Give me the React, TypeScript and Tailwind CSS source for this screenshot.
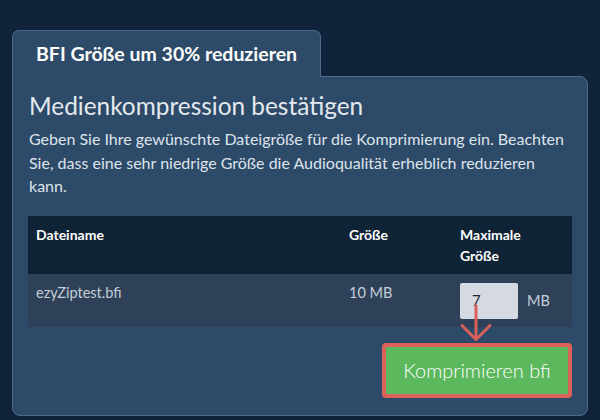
import React from 'react';

const font = { fontFamily: 'Lato, "Open Sans", sans-serif' };

function ArrowDown() {
  return (
    <svg
      className="absolute left-0 top-[19px] pointer-events-none"
      width="34"
      height="42"
      viewBox="0 0 34 42"
      fill="none"
    >
      <path d="M16 4 L16 37" stroke="#d9605a" strokeWidth="3" strokeLinecap="round" />
      <path d="M2 23.5 L16 37.5 L30 23.5" stroke="#d9605a" strokeWidth="3" strokeLinecap="round" strokeLinejoin="round" />
    </svg>
  );
}

export default function App() {
  return (
    <div className="w-[600px] h-[420px] bg-[#11233a] overflow-hidden pt-[30px] px-[12px]" style={font}>
      {/* Tab */}
      <div className="flex">
        <div className="relative z-10 -mb-px w-[309px] h-[47px] rounded-t-[7px] border border-b-0 border-[#4e6a8a] bg-[#2d4a69] pl-[23px] pt-[11px]">
          <h2 className="text-[19.5px] leading-[24px] font-bold text-white">BFI Größe um 30% reduzieren</h2>
        </div>
      </div>

      {/* Panel */}
      <div className="h-[340px] rounded-b-[8px] rounded-tr-[8px] border border-[#4e6a8a] bg-[#2d4a69] px-[15px] pt-[14px]">
        <h1 className="text-[24.4px] leading-[29px] text-[#e4e9ef] pl-[1px]">Medienkompression bestätigen</h1>
        <p className="mt-[7px] pl-[1px] pr-[4px] text-[16px] leading-[23.5px] text-[#dde4ec]">
          Geben Sie Ihre gewünschte Dateigröße für die Komprimierung ein. Beachten Sie, dass eine sehr niedrige Größe die Audioqualität erheblich reduzieren kann.
        </p>

        <table className="mt-[18px] w-full text-[14px] leading-[21px] border-collapse">
          <thead>
            <tr className="bg-[#0f2336] h-[58px] align-top text-left">
              <th className="w-[313px] px-2 pt-[8px] font-bold text-white">Dateiname</th>
              <th className="w-[111px] px-2 pt-[8px] font-bold text-white">Größe</th>
              <th className="px-2 pt-[8px] font-bold text-white">
                Maximale
                <br />
                Größe
              </th>
            </tr>
          </thead>
          <tbody>
            <tr className="bg-[#2e4159] h-[53px] align-top text-[14.5px] text-[#c5cdd7]">
              <td className="px-2 pt-[8px]">ezyZiptest.bfi</td>
              <td className="px-2 pt-[8px]">10 MB</td>
              <td className="pl-2 pt-[9px]">
                <div className="relative flex items-center gap-[9px]">
                  <div className="w-[58px] h-[36px] rounded-[2px] bg-[#d5dae2] pl-[12px] flex items-center text-[15px] text-[#1f2b38]">
                    7
                  </div>
                  <span className="text-[14.5px] text-[#c5cdd7]">MB</span>
                  <ArrowDown />
                </div>
              </td>
            </tr>
          </tbody>
        </table>

        <div className="mt-[16px] flex justify-end">
          <button className="w-[190px] h-[55px] rounded-[4px] border-[4.5px] border-[#dc615b] bg-[#5cb85c] text-[20px] font-light text-white">
            Komprimieren bfi
          </button>
        </div>
      </div>
    </div>
  );
}
